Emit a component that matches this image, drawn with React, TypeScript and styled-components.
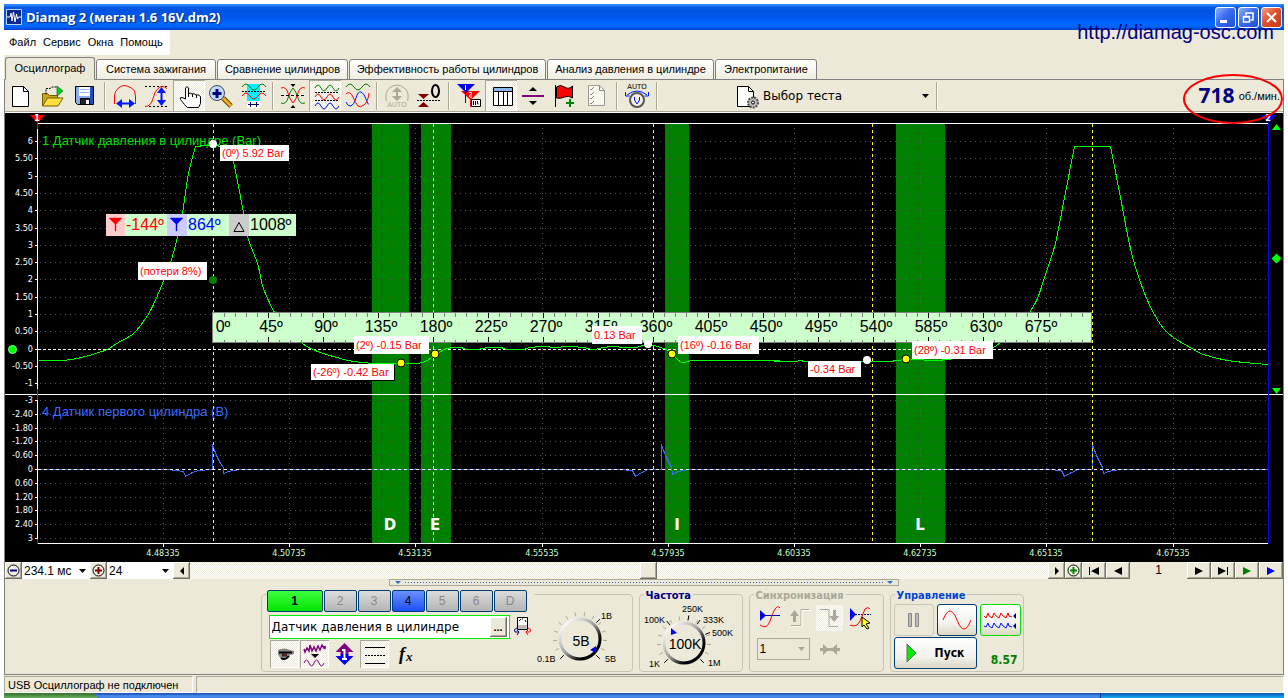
import React from "react";
import styled, { createGlobalStyle, css } from "styled-components";

const FACE = "#ece9d8";
const SHADE = "#aca899";
const UI = `"Liberation Sans", Arial, sans-serif`;
const WIDE = `"DejaVu Sans", Verdana, sans-serif`;
const HEAVY = `"DejaVu Sans Condensed", Tahoma, sans-serif`;
const HUMANIST = `"Open Sans", "Trebuchet MS", sans-serif`;
const dither = css`
  background: conic-gradient(#fff 25%, ${FACE} 0 50%, #fff 0 75%, ${FACE} 0) 0 0 / 2px 2px;
`;

const GlobalStyle = createGlobalStyle`
  * { box-sizing: border-box; }
  body { margin: 0; background: #fff; font: 11px/13px ${UI}; color: #000; }
  button, input, select { font: inherit; color: inherit; margin: 0; padding: 0; border: 0; border-radius: 0; background: none; }
  svg { display: block; }
`;

const Shell = styled.div`
  position: relative;
  padding: 4px 4px 0;
`;

/* ---------- title bar, menu, tabs ---------- */

const TitleBar = styled.header`
  display: flex;
  align-items: center;
  gap: 4px;
  height: 26px;
  padding: 0 2px;
  background: linear-gradient(#3c96ff 0, #0a5fe8 3px, #0053e0 6px, #0058ee 14px, #0068ff 20px, #0063f8 23px, #0340c8 26px);
`;

const Title = styled.h1`
  flex: 1;
  margin: 0;
  font: bold 13px/18px ${HUMANIST};
  color: #fff;
  text-shadow: 1px 1px 1px #0a2a80;
`;

const WindowButtons = styled.div`
  display: flex;
  gap: 2px;
`;

const WindowButton = styled.button<{ $close?: boolean }>`
  width: 21px;
  height: 21px;
  border: 1px solid #fff;
  border-radius: 3px;
  background: ${(p) =>
    p.$close
      ? "linear-gradient(135deg, #f0a088, #e0502c 45%, #c03c14)"
      : "linear-gradient(135deg, #8fb0fa, #3a6cf0 45%, #1e50d8)"};
`;

const SiteLink = styled.a`
  position: absolute;
  top: 21px;
  right: 14px;
  font: 20px/23px ${UI};
  color: #000080;
  text-decoration: none;
`;

const MenuStrip = styled.nav`
  height: 27px;
  padding-bottom: 2px;
  background: ${FACE};
`;

const MenuItems = styled.div`
  display: inline-flex;
  align-items: center;
  gap: 7px;
  height: 25px;
  padding: 0 7px 0 5px;
  background: #fff;
`;

const Tabs = styled.div`
  display: flex;
  align-items: flex-end;
  gap: 1px;
  height: 23px;
  padding-left: 1px;
  background: ${FACE};
  box-shadow: inset 0 -1px #808080;
`;

const Tab = styled.button<{ $w: number; $active?: boolean }>`
  width: ${(p) => p.$w}px;
  height: ${(p) => (p.$active ? 23 : 21)}px;
  border: 1px solid #808080;
  border-bottom-color: ${(p) => (p.$active ? FACE : "#808080")};
  border-radius: 3px 3px 0 0;
  background: ${(p) => (p.$active ? FACE : "linear-gradient(#fff, #f0eee2)")};
  white-space: nowrap;
`;

/* ---------- toolbar ---------- */

const Body = styled.main`
  border: 1px solid #808080;
  border-top: 0;
  background: ${FACE};
`;

const Toolbar = styled.div`
  display: flex;
  align-items: center;
  height: 33px;
  border-bottom: 1px solid #fff;
  box-shadow: inset 0 -1px ${SHADE};
`;

const sunken = css`
  ${dither}
  box-shadow: inset 1px 1px ${SHADE}, inset -1px -1px #fff;
`;

const ToolButton = styled.button<{ $pressed?: boolean }>`
  flex: none;
  width: 32px;
  height: 31px;
  align-self: flex-start;
  ${(p) => p.$pressed && sunken}
`;

const Separator = styled.i`
  flex: none;
  width: 2px;
  height: 28px;
  margin: 0 3px;
  border-left: 1px solid ${SHADE};
  border-right: 1px solid #fff;
`;

const SelectBox = styled.span<{ $w: number; $h: number; $white?: boolean; $framed?: boolean }>`
  display: grid;
  flex: none;
  width: ${(p) => p.$w}px;
  height: ${(p) => p.$h}px;
  align-items: center;
  background: ${(p) => (p.$white ? "#fff" : "none")};
  border: ${(p) => (p.$framed ? `1px solid ${SHADE}` : 0)};
  & > * { grid-area: 1 / 1; }
  & > svg { justify-self: end; margin-right: 4px; pointer-events: none; }
`;

const Select = styled.select<{ $large?: boolean }>`
  appearance: none;
  width: 100%;
  height: 100%;
  padding-left: ${(p) => (p.$large ? 0 : 2)}px;
  font: ${(p) => (p.$large ? `12px/16px ${WIDE}` : `12px/14px ${UI}`)};
`;

const TestPicker = styled.label`
  display: flex;
  align-items: center;
  margin-left: 72px;
`;

const Rpm = styled.output`
  position: relative;
  display: flex;
  align-items: center;
  gap: 4px;
  margin-left: auto;
  padding-right: 3px;
  & strong { padding-bottom: 3px; font: bold 21px/24px ${HUMANIST}; color: #000080; }
`;

const RpmMark = styled.svg`
  position: absolute;
  top: -10px;
  right: 0;
  z-index: 1;
  overflow: visible;
`;

/* ---------- chart ---------- */

const Chart = styled.svg`
  width: 100%;
  height: auto;
  background: #000;
`;

/* ---------- scroll row ---------- */

const ScrollRow = styled.div`
  display: flex;
  height: 17px;
`;

const raised = css`
  background: ${FACE};
  box-shadow: inset -1px -1px #716f64, inset 1px 1px #fff, inset -2px -2px ${SHADE};
`;

const SmallButton = styled.button<{ $w: number }>`
  flex: none;
  display: grid;
  place-items: center;
  width: ${(p) => p.$w}px;
  height: 17px;
  ${raised}
`;

const Page = styled.span`
  flex: none;
  width: 57px;
  font-size: 12px;
  line-height: 17px;
  text-align: center;
`;

const Scroller = styled.input`
  flex: 1;
  min-width: 0;
  height: 17px;
  appearance: none;
  ${dither}
  &::-webkit-slider-thumb {
    appearance: none;
    width: 17px;
    height: 17px;
    ${raised}
  }
`;

const Splitter = styled.div`
  display: flex;
  align-items: center;
  justify-content: space-between;
  width: 510px;
  height: 7px;
  margin: 0 auto;
  padding: 0 5px;
  border: 1px solid ${SHADE};
  &::before, &::after { content: ""; border: 3px solid transparent; border-top-color: #316ac5; border-bottom: 0; }
`;

const SplitterDots = styled.i`
  flex: 1;
  margin: 0 4px;
  height: 1px;
  background: repeating-linear-gradient(90deg, #316ac5 0 1px, transparent 1px 3px);
`;

/* ---------- control panel ---------- */

const Panel = styled.section`
  display: flex;
  justify-content: center;
  gap: 6px;
  height: 88px;
  padding: 2px 4px 2px 0;
`;

const frame = css`
  margin: 0;
  border: 1px solid #c8c5b6;
  border-radius: 4px;
`;

const ChannelGroup = styled.div`
  ${frame}
  display: flex;
  flex: none;
  width: 372px;
  margin-top: 6px;
  padding-left: 5px;
`;

const Group = styled.fieldset<{ $w: number }>`
  ${frame}
  flex: none;
  width: ${(p) => p.$w}px;
  min-width: 0;
  padding: 0;
`;

const Legend = styled.legend<{ $color: string }>`
  margin-left: 4px;
  padding: 3px 2px 0;
  font: bold 11px/9px ${HEAVY};
  color: ${(p) => p.$color};
`;

const ChannelColumn = styled.div`
  width: 267px;
  margin-top: -5px;
`;

const ChannelTabs = styled.div`
  display: flex;
  gap: 1px;
  background: ${FACE};
`;

const ChannelTab = styled.button<{ $tone?: "on" | "blue" }>`
  width: ${(p) => (p.$tone === "on" ? 56 : 33)}px;
  height: 22px;
  border: 1px solid #003c74;
  border-radius: 2px;
  font: ${(p) => (p.$tone === "on" ? "bold" : "normal")} 12px/14px ${UI};
  color: ${(p) => (p.$tone ? "#000" : "#888")};
  background: ${(p) =>
    p.$tone === "on"
      ? "linear-gradient(#40ff40, #00e400)"
      : p.$tone === "blue"
        ? "linear-gradient(#6c90ff, #1c50f8)"
        : "linear-gradient(#dcdcdc, #b4b4b4)"};
`;

const NameRow = styled.div`
  display: flex;
  align-items: center;
  gap: 3px;
  margin: 3px 0 1px 2px;
`;

const NameBox = styled.div`
  display: flex;
  align-items: center;
  width: 241px;
  height: 24px;
  padding-right: 2px;
  border: 1px solid #00f000;
  background: #fff;
  & input { flex: 1; min-width: 0; padding-left: 2px; font: 12px/16px ${WIDE}; }
`;

const MoreButton = styled.button`
  width: 17px;
  height: 20px;
  ${raised}
  font-weight: bold;
  line-height: 12px;
`;

const OptionRow = styled.div`
  display: flex;
  gap: 1px;
  padding-left: 3px;
`;

const OptionButton = styled.button<{ $pressed?: boolean }>`
  width: 29px;
  height: 28px;
  ${(p) => p.$pressed && sunken}
`;

const SyncGrid = styled.div`
  display: grid;
  grid-template-columns: repeat(4, 30px);
  padding: 5px 0 0 6px;
  row-gap: 7px;
  & > span { grid-column: span 2; margin-left: 1px; }
`;

const SyncButton = styled.button<{ $pressed?: boolean }>`
  width: 27px;
  height: 26px;
  ${(p) => p.$pressed && dither}
`;

const RunGrid = styled.div`
  display: grid;
  grid-template-columns: 40px 40px 41px;
  gap: 1px 3px;
  padding: 4px 0 0 3px;
`;

const XpButton = styled.button<{ $edge: string; $span?: number }>`
  display: flex;
  align-items: center;
  justify-content: center;
  gap: 18px;
  grid-column: span ${(p) => p.$span ?? 1};
  height: 32px;
  border: 1px solid ${(p) => p.$edge};
  border-radius: 3px;
  background: linear-gradient(#fff, #f4f3ee 60%, #dcd8c4);
  font: bold 12px/14px ${HEAVY};
  &:disabled { background: ${FACE}; }
`;

const RunValue = styled.output`
  align-self: center;
  padding: 14px 3px 0 0;
  font: bold 12px/14px ${HEAVY};
  color: #008000;
  text-align: right;
`;

/* ---------- status and task bars ---------- */

const StatusBar = styled.footer`
  display: flex;
  gap: 3px;
  height: 18px;
  padding-top: 1px;
  background: ${FACE};
`;

const StatusCell = styled.span<{ $grow?: boolean }>`
  flex: ${(p) => (p.$grow ? "1" : "0 0 189px")};
  padding-left: 3px;
  border: 1px solid;
  border-color: ${SHADE} #fff #fff ${SHADE};
  line-height: 16px;
`;

const TaskBar = styled.div`
  display: flex;
  height: 5px;
  background: linear-gradient(#2058c0 0 1px, #4a90ea 3px, #3a7ce0);
  &::before { content: ""; width: 93px; border-radius: 0 6px 0 0; background: linear-gradient(#3a7a34 0 1px, #6ab060); }
  &::after { content: ""; width: 183px; margin-left: auto; border-left: 1px solid #0a3c90; background: linear-gradient(#1060c0 0 1px, #18b0f0); }
`;

/* ---------- icons ---------- */

/** A run of half waves, starting upwards when amp is positive. */
const wave = (x: number, y: number, half: number, amp: number, count: number) =>
  `M${x} ${y}` + Array.from({ length: count }, (_, i) => `q${half / 2} ${i % 2 ? amp * 2 : -amp * 2} ${half} 0`).join("");

const Icon = ({ w = 32, h = 31, children }: { w?: number; h?: number; children: React.ReactNode }) => (
  <svg width={w} height={h} viewBox={`0 0 ${w} ${h}`} fill="none" stroke="#000" aria-hidden="true">
    {children}
  </svg>
);

const Caret = ({ color = "#000" }: { color?: string }) => (
  <svg width="7" height="4" viewBox="0 0 7 4" aria-hidden="true">
    <path d="M0 0h7L3.500 4z" fill={color} />
  </svg>
);

const NewIcon = () => (
  <Icon>
    <path d="M7.500 6.500h11l5 5v15h-16z" fill="#fff" />
    <path d="M18.500 6.500v5h5" />
  </Icon>
);
const OpenIcon = () => (
  <Icon>
    <path d="M5.500 25.500v-12h5l2 2h8v3" fill="#c8a818" stroke="#706000" />
    <path d="M5.500 26l5-8h15.500l-5 8z" fill="#ffe040" stroke="#706000" />
    <path d="M9 14.500v-6h4l2-1.500h5" strokeDasharray="2 1" />
    <path d="M20 6l6 5-6 5z" fill="#00d020" stroke="#006000" strokeWidth=".6" />
  </Icon>
);
const SaveIcon = () => (
  <Icon>
    <path d="M6.500 6.500h18v18h-16l-2-2z" fill="#88aef0" />
    <path d="M21 7h3v17h-3z" fill="#2048c8" stroke="none" />
    <path d="M10 7h11v9H10z" fill="#fff" stroke="none" />
    <path d="M11 9.500h9M11 12.500h9" stroke="#9ab8f0" />
    <path d="M11.500 18.500h9v6h-9z" fill="#222" />
    <path d="M17 20h3v4h-3z" fill="#fff" stroke="none" />
  </Icon>
);
const SpanIcon = () => (
  <Icon>
    <path d="M5.500 24v-8q0-5 4-8t6.500-2.500 6.500 2.500 4 8v8" stroke="red" />
    <path d="M10 23.500h13" stroke="#0018ff" strokeWidth="2" />
    <path d="M13 19v9l-6-4.500zM20 19v9l6-4.500z" fill="#0018ff" stroke="none" />
  </Icon>
);
const HeightIcon = () => (
  <Icon>
    <path d="M4 6.500h22M8 26.500h18" strokeDasharray="2 2" />
    <path d="M4 26.500q6 0 8-8t5-10q4-4 9 0" stroke="red" />
    <path d="M20.500 11v12" stroke="#0018ff" strokeWidth="2" />
    <path d="M16 13h9l-4.500-6zM16 20h9l-4.500 6z" fill="#0018ff" stroke="none" />
  </Icon>
);
const HandIcon = () => (
  <Icon>
    <path
      d="M12.500 19V8q1.500-3 3 0v6q1.500-2 3.500 0 2-1 4 1 2-1 4.500 1.500v7l-2 4h-11l-3-3-4-5q-1-2.500 1.500-2z"
      fill="#fff"
    />
    <path d="M15.500 13v4M19.500 14v3M23.500 15v3" />
  </Icon>
);
const MagnifierIcon = () => (
  <Icon>
    <path d="M18 18l8 8" stroke="#604000" strokeWidth="5" />
    <path d="M18 18l8 8" stroke="#f0b020" strokeWidth="3" />
    <circle cx="12" cy="13" r="7.500" fill="#c0dcf8" stroke="#446" />
    <path d="M12 9v9M7.500 13.500h9" stroke="#000080" strokeWidth="3" />
  </Icon>
);
const WindowSpanIcon = () => (
  <Icon>
    <path d="M10 4h13v23H10z" fill="#00f0ff" stroke="none" />
    <path d={wave(5, 7, 8, 3, 3)} stroke="#008000" />
    <path d={wave(5, 16, 8, 3, 3)} stroke="red" />
    <path d="M5 11.500h23" strokeDasharray="2 1" />
    <path d="M10 21h13v7H10z" fill="#fff" stroke="none" />
    <path d="M11 24.500h11M13.500 22v5M19.500 22v5" stroke="#000080" />
  </Icon>
);
const CrossIcon = () => (
  <Icon>
    <path d="M4 23q5 2 7-5t5-10q3 3 5 10t7 5" stroke="#008000" />
    <path d="M4 8q5-2 7 5t5 10q3-3 5-10t7-5" stroke="red" />
    <path d="M4 15.500h24" strokeDasharray="3 2" />
    <path d="M13.500 4h5L16 7zM13.500 28h5L16 25z" fill="#000" stroke="none" />
  </Icon>
);
const WavesIcon = () => (
  <Icon>
    <path d={wave(6, 8, 6, 3, 4)} stroke="#008000" />
    <path d="M6 12.500h23M6 20.500h23" strokeDasharray="2 1" />
    <path d={wave(6, 17, 6, 3, 4)} stroke="red" />
    <path d={wave(6, 26, 6, 3, 4)} stroke="#0018d0" />
  </Icon>
);
const OverlapIcon = () => (
  <Icon>
    <path d={wave(5, 7, 8, 3, 3)} stroke="#008000" />
    <path d="M5 22q2 5 5 4t5-8 5-6 5 7 3 5" stroke="#0018ff" />
    <path d="M5 14q4-4 7 3t5 9 6-1 5-12" stroke="red" />
  </Icon>
);
const AutoHeightIcon = () => (
  <Icon>
    <path d="M5.500 21q-2-8 2-12t8.500-4 8.500 4 2 12" stroke={SHADE} />
    <path d="M11 12h10l-5-5zM11 16h10l-5 5z" fill={SHADE} stroke="none" />
    <path d="M16 10v9" stroke={SHADE} strokeWidth="2" />
    <text x="16" y="27" textAnchor="middle" fontSize="7" fontFamily={WIDE} fill={SHADE} stroke="none">AUTO</text>
  </Icon>
);
const ZeroIcon = () => (
  <Icon>
    <path d="M5 14h11l-5.500 5zM5 27h11l-5.500-5z" fill="#800000" stroke="none" />
    <path d="M4 20.500h24" strokeDasharray="2 1" />
    <ellipse cx="22.500" cy="11" rx="3.500" ry="6" strokeWidth="2" />
  </Icon>
);
const MarkersIcon = () => (
  <Icon>
    <path d="M8 11h19l-9.500 9z" fill="red" stroke="none" />
    <path d="M17.500 17v10" stroke="red" />
    <path d="M4 4h18l-9 9z" fill="#0000e8" stroke="none" />
    <path d="M12.500 9v14" stroke="#0000e8" />
    <path d="M12.500 5v5M16 12.500h2.500v2.500h-2v2h2.500" stroke="#fff" />
    <path d="M18.500 19.500h9v7h-9z" fill="#fff" />
    <path d="M20.500 21v4M22.500 21v4M24.500 21v3h1" />
  </Icon>
);
const TableIcon = () => (
  <Icon>
    <path d="M8.500 7.500h19v18h-19z" fill="#fff" />
    <path d="M9 8h18v3H9z" fill="#8ab8f0" stroke="none" />
    <path d="M8 11.500h20M13.500 11v14M18.500 11v14M22.500 11v14" />
  </Icon>
);
const SplitIcon = () => (
  <Icon>
    <path d="M5 16h22" stroke="#800080" strokeWidth="2" />
    <path d="M12 11h8l-4-4zM12 21h8l-4 4z" fill="#000" stroke="none" />
  </Icon>
);
const FlagIcon = () => (
  <Icon>
    <path d="M7.500 7q4-3 8 0t8-1v12q-4-3-8-1t-8 1z" fill="red" />
    <path d="M6.500 5v22" />
    <path d="M21 19v8M17 23h8" stroke="#008000" strokeWidth="2" />
  </Icon>
);
const ChecklistIcon = () => (
  <Icon>
    <path d="M7.500 5.500h11l5 5v15h-16z" fill="#fbf9ee" stroke="#999" />
    <path d="M18.500 5.500v5h5M9 9l1 1 3-3M9 14l1 1 3-3M9 18l1 1 3-3M9 23l1 1 3-3" stroke="#888" />
  </Icon>
);
const AutoVoltIcon = () => (
  <Icon>
    <text x="16" y="9" textAnchor="middle" fontSize="7" fontFamily={WIDE} fill="#000" stroke="none">AUTO</text>
    <path d="M6 15q10-8 20 0M4.500 12v4h4M27.500 12v4h-4" stroke="#0018ff" />
    <circle cx="16" cy="20" r="7" fill="#f4f2e6" stroke="#555" strokeWidth="2" />
    <path d="M13.500 17v3l2.500 4 2.500-4v-3" stroke="#0018ff" />
  </Icon>
);
const TestIcon = () => (
  <Icon w={30}>
    <path d="M4.500 5.500h11l5 5v15h-16z" fill="#fff" />
    <path d="M15.500 5.500v5h5" />
    <circle cx="20" cy="21.500" r="5" fill="#bbb" stroke="#555" strokeWidth="2" strokeDasharray="2 1" />
    <circle cx="20" cy="21.500" r="1.500" fill="#fff" />
  </Icon>
);

type ToolEntry = { name: string; icon?: () => React.JSX.Element; pressed?: boolean };
const sep: ToolEntry = { name: "" };
const tools: ToolEntry[] = [
  { name: "Новый", icon: NewIcon },
  { name: "Открыть", icon: OpenIcon },
  { name: "Сохранить", icon: SaveIcon },
  sep,
  { name: "Ширина", icon: SpanIcon },
  { name: "Высота", icon: HeightIcon },
  { name: "Рука", icon: HandIcon, pressed: true },
  { name: "Лупа", icon: MagnifierIcon },
  { name: "Окно", icon: WindowSpanIcon },
  sep,
  { name: "Центр", icon: CrossIcon },
  { name: "Раздельно", icon: WavesIcon, pressed: true },
  { name: "Вместе", icon: OverlapIcon },
  sep,
  { name: "Авто высота", icon: AutoHeightIcon },
  { name: "Ноль", icon: ZeroIcon },
  sep,
  { name: "Маркеры", icon: MarkersIcon },
  { name: "Таблица", icon: TableIcon, pressed: true },
  { name: "Разделить", icon: SplitIcon },
  { name: "Флаг", icon: FlagIcon },
  { name: "Список", icon: ChecklistIcon },
  sep,
  { name: "Авто напряжение", icon: AutoVoltIcon },
  sep,
];

/* ---------- chart data ---------- */

const pressureTicks = ["6", "5.50", "5", "4.50", "4", "3.50", "3", "2.50", "2", "1.50", "1", "0.50", "0", "-0.50", "-1"];
const sensorTicks = ["-3", "-2.40", "-1.80", "-1.20", "-0.60", "0", "0.60", "1.20", "1.80", "2.40", "3"];
const times = ["4.48335", "4.50735", "4.53135", "4.55535", "4.57935", "4.60335", "4.62735", "4.65135", "4.67535"];
const rows = [
  ...pressureTicks.map((text, i) => ({ text, y: Math.round(141 + i * 17.3) })),
  ...sensorTicks.map((text, i) => ({ text, y: Math.round(400 + i * 13.8) })),
];
const columns = times.map((text, i) => ({ text, x: Math.round(163 + i * 126.2) }));
const bands = [
  { name: "D", x: 372, w: 37, mid: 390 },
  { name: "E", x: 421, w: 30, mid: 435 },
  { name: "I", x: 665, w: 24, mid: 677 },
  { name: "L", x: 896, w: 49, mid: 920 },
];
const strokes = [213, 433, 653, 872, 1092];

/* Smooth stretches of the pressure trace; each starts where the last one ends. */
const pressure = [
  "38,360 57,360 71,359 85,356 98,352 107,349 118,342 132,334 140,325 150,310 160,288 170,262 177,237 182,213 188,173 195,146",
  "195,146 205,145 213,144 220,146 229,146",
  "229,146 233,161 243,212 248,239 257,263 262,285 268,300 274,312 284,328 302,343 310,348 323,353 340,358 353,361 375,363 401,363 415,363 422,362 430,358 443,349",
  "443,349 452,347 460,347 467,349 477,349 488,347 500,347 507,349 522,349 530,347 543,346 555,347 567,346 583,347 593,349 603,347 613,346 623,347 635,347 648,344 660,347 668,350 672,353 677,359 682,362 687,361 693,360",
  "693,360 773,360 775,361 793,361 802,360 807,361 862,361 888,361 906,359 933,360",
  "933,360 947,359 970,355 993,347 1016,328 1029,312 1037,298 1043,280 1047,268 1052,253 1056,238 1065,192 1074,146",
  "1074,146 1110,146",
  "1110,146 1120,197 1128,239 1133,260 1140,282 1147,300 1155,316 1163,328 1173,337 1193,349 1203,354 1227,360 1255,363 1268,364",
];

/** Catmull-Rom spline through the listed points. */
const smooth = (list: string) => {
  const p = list.split(" ").map((s) => s.split(",").map(Number));
  const at = (i: number) => p[Math.max(0, Math.min(p.length - 1, i))];
  return p.slice(1).reduce((d, [x, y], k) => {
    const [a, b, n] = [at(k - 1), at(k), at(k + 2)];
    return `${d}C${b[0] + (x - a[0]) / 6} ${b[1] + (y - a[1]) / 6} ${x - (n[0] - b[0]) / 6} ${y - (n[1] - b[1]) / 6} ${x} ${y}`;
  }, `M${p[0][0]} ${p[0][1]}`);
};

const sensor =
  "38,469 168,469 183,471 185,476 192,472 198,470 212,469 212,444 216,455 220,463 223,467 223,473 228,471 240,469 618,469 632,470 635,476 641,472 648,469 661,469 661,444 665,455 669,463 671,467 672,474 678,471 688,469 1048,469 1061,470 1064,476 1071,472 1078,469 1092,469 1092,444 1096,455 1100,463 1102,467 1103,473 1108,471 1120,469 1268,469";

type Callout = { text: string; x: number; y: number; w: number; h: number };
const callouts: Callout[] = [
  { text: "(0º) 5.92 Bar", x: 220, y: 145, w: 69, h: 16 },
  { text: "(потери 8%)", x: 138, y: 262, w: 69, h: 18 },
  { text: "(2º) -0.15 Bar", x: 354, y: 336, w: 75, h: 18 },
  { text: "(-26º) -0.42 Bar", x: 311, y: 364, w: 83, h: 16 },
  { text: "0.13 Bar", x: 592, y: 326, w: 50, h: 18 },
  { text: "(16º) -0.16 Bar", x: 678, y: 336, w: 81, h: 18 },
  { text: "-0.34 Bar", x: 808, y: 361, w: 53, h: 16 },
  { text: "(28º) -0.31 Bar", x: 912, y: 341, w: 81, h: 18 },
];
const dots = [
  { x: 213, y: 144, fill: "#fff" },
  { x: 213, y: 280, fill: "#008000" },
  { x: 401, y: 363, fill: "#ff0" },
  { x: 435, y: 354, fill: "#ff0" },
  { x: 648, y: 344, fill: "#fff" },
  { x: 672, y: 354, fill: "#ff0" },
  { x: 867, y: 360, fill: "#fff" },
  { x: 906, y: 359, fill: "#ff0" },
];
const cursors = [
  { x: 106, tab: 19, w: 61, tint: "#ffcccc", ink: "red", text: "-144º" },
  { x: 167, tab: 20, w: 62, tint: "#ccccff", ink: "#0000ff", text: "864º" },
  { x: 229, tab: 20, w: 67, tint: "#cccccc", ink: "#000", text: "1008º" },
];

const Oscillogram = () => (
  <Chart viewBox="5 113 1278 449" fontFamily={UI} role="img" aria-label="Осциллограмма">
    <g shapeRendering="crispEdges">
      {bands.map((b) => (
        <rect key={b.name} x={b.x} y="124" width={b.w} height="419" fill="#008000" />
      ))}
      <g stroke="#555" strokeDasharray="1 4">
        {rows.map((r) => (
          <path key={r.y} d={`M40 ${r.y + 0.5}H1267`} />
        ))}
        {columns.map((c) => (
          <path key={c.x} d={`M${c.x + 0.5} 128V543`} />
        ))}
      </g>
      <g stroke="#fff">
        {rows.map((r) => (
          <path key={r.y} d={`M35 ${r.y + 0.5}h3`} />
        ))}
        {columns.map((c) => (
          <path key={c.x} d={`M${c.x + 0.5} 544v3`} />
        ))}
        <path d="M37.500 123V543.500H1268M37 123.500H1268M5 394.500H1283" fill="none" />
        <path d="M38 349.500H1268" strokeDasharray="3 2" />
      </g>
      <polyline points={sensor} fill="none" stroke="#3c6cff" transform="translate(.5 .5)" />
      <path d="M38 469.500H1268" stroke="#fff" strokeDasharray="3 3" />
    </g>
    <text x="42" y="145" fontSize="13" fill="#00e000">1 Датчик давления в цилиндре (Bar)</text>
    <text x="42" y="416" fontSize="13" fill="#3c6cff">4 Датчик первого цилиндра (В)</text>
    <g shapeRendering="crispEdges">
      <path d={pressure.map(smooth).join("")} fill="none" stroke="#00ff00" transform="translate(.5 .5)" />
      <g stroke="#ff0" strokeDasharray="3 3">
        {strokes.map((x) => (
          <path key={x} d={`M${x + 0.5} 124V543`} />
        ))}
      </g>
      <path d="M37.500 122v7M37.500 389v11M37.500 539v5" stroke="red" />
      <path d="M1268.500 122V544" stroke="#0000ff" />
    </g>
    <g fontSize="9" fill="#fff" textAnchor="end" fontFamily={HEAVY}>
      {rows.map((r) => (
        <text key={r.y} x="33" y={r.y + 3}>{r.text}</text>
      ))}
    </g>
    <g fontSize="9" fill="#ccffcc" textAnchor="middle" fontFamily={HEAVY}>
      {columns.map((c) => (
        <text key={c.x} x={c.x} y="556">{c.text}</text>
      ))}
    </g>
    <g fontSize="15" fontWeight="bold" fill="#fff" textAnchor="middle" fontFamily={WIDE}>
      {bands.map((b) => (
        <text key={b.name} x={b.mid} y="530">{b.name}</text>
      ))}
    </g>

    <path d="M30 115h15l-7.500 8z" fill="red" />
    <path d="M1261 115h15l-7.500 8z" fill="#0000ff" />
    <g fontSize="8" fontWeight="bold" fill="#fff" textAnchor="middle" fontFamily={WIDE}>
      <text x="37" y="121">1</text>
      <text x="1268" y="121">2</text>
    </g>
    <circle cx="12.500" cy="349.500" r="4" fill="#00ff00" stroke="#80ff80" />
    <path d="M1272 130h9l-4.500-6zM1272 388h9l-4.500 6zM1276.500 253.500l5 5-5 5-5-5z" fill="#00ff00" />

    {cursors.map((c, i) => (
      <g key={c.text}>
        <rect x={c.x} y="214" width={c.w} height="22" fill="#ccffcc" />
        <rect x={c.x} y="214" width={c.tab} height="22" fill={c.tint} />
        {i < 2 ? (
          <path d={`M${c.x + 3} 218h13l-6 6v7h-1v-7z`} fill={c.ink} stroke={c.ink} strokeWidth=".4" />
        ) : (
          <path d={`M${c.x + 5} 231.500h10l-5-9z`} fill="none" stroke={c.ink} />
        )}
        <text x={c.x + c.tab + 1} y="230" fontSize="16" fill={c.ink}>{c.text}</text>
      </g>
    ))}

    <g shapeRendering="crispEdges">
      <rect x="212.500" y="312.500" width="879" height="30" fill="#ccffcc" stroke="#808080" />
      {Array.from({ length: 79 }, (_, i) => (
        <path
          key={i}
          d={`M${224.5 + i * 11} 313v${(i + 1) % 5 ? 4 : 5}M${224.5 + i * 11} 342v${(i + 1) % 5 ? -2 : -5}`}
          stroke={(i + 1) % 5 ? "#808080" : "#000"}
        />
      ))}
    </g>
    <g fontSize="16" fill="#000" textAnchor="middle">
      {Array.from({ length: 13 + 3 }, (_, i) => (
        <text key={i} x={i ? 216 + i * 55 : 223} y="332">{`${i * 45}º`}</text>
      ))}
    </g>

    <rect x="312" y="365" width="83" height="16" fill="#000" />
    {callouts.map((c) => (
      <g key={c.text}>
        <rect x={c.x} y={c.y} width={c.w} height={c.h} fill="#fff" />
        <text x={c.x + 2} y={c.y + c.h / 2 + 4} fontSize="11" fill="red">{c.text}</text>
      </g>
    ))}
    {dots.map((d) => (
      <circle key={`${d.x}-${d.y}`} cx={d.x} cy={d.y} r="4" fill={d.fill} stroke={d.fill === "#ff0" ? "#000" : "none"} />
    ))}
  </Chart>
);

/* ---------- knobs ---------- */

type KnobLabel = { text: string; x: number; y: number };
type KnobProps = {
  w: number;
  cx: number;
  cy: number;
  value: string;
  valueY: number;
  pointer: string;
  labels: KnobLabel[];
  major: number[];
  id: string;
};

const Knob = ({ w, cx, cy, value, valueY, pointer, labels, major, id }: KnobProps) => {
  const ray = (deg: number, r1: number, r2: number) => {
    const a = (deg * Math.PI) / 180;
    return `M${cx + r1 * Math.cos(a)} ${cy - r1 * Math.sin(a)}L${cx + r2 * Math.cos(a)} ${cy - r2 * Math.sin(a)}`;
  };
  const minor = Array.from({ length: 14 }, (_, i) => -45 + i * 20.8);
  return (
    <svg width={w} height="74" viewBox={`0 0 ${w} 74`} fontFamily={UI} role="img" aria-label={value}>
      <defs>
        <linearGradient id={id} x1="0" y1="0" x2="1" y2="1">
          <stop offset=".1" stopColor="#fff" />
          <stop offset=".5" stopColor="#999" />
          <stop offset=".75" stopColor="#000" />
        </linearGradient>
      </defs>
      <path d={minor.map((d) => ray(d, 23, 27)).join("")} stroke={SHADE} />
      <path d={major.map((d) => ray(d, 23, 28)).join("")} stroke="#000" />
      <circle cx={cx} cy={cy} r="20" fill={FACE} stroke={`url(#${id})`} strokeWidth="3" />
      <path d={pointer} fill="#0000ff" />
      <text x={cx + 1} y={valueY} fontSize="14" textAnchor="middle">{value}</text>
      {labels.map((l) => (
        <text key={l.text} x={l.x} y={l.y} fontSize="9">{l.text}</text>
      ))}
    </svg>
  );
};

/* ---------- page ---------- */

const tabs = [
  { text: "Осциллограф", w: 90 },
  { text: "Система зажигания", w: 120 },
  { text: "Сравнение цилиндров", w: 131 },
  { text: "Эффективность работы цилиндров", w: 197 },
  { text: "Анализ давления в цилиндре", w: 167 },
  { text: "Электропитание", w: 102 },
];

const ZoomIcon = ({ color, plus }: { color: string; plus?: boolean }) => (
  <Icon w={13} h={13}>
    <circle cx="6.500" cy="6.500" r="5.500" fill="#f4f2e6" />
    <path d={plus ? "M6.500 3v7M3 6.500h7" : "M3 6.500h7"} stroke={color} strokeWidth="2" />
  </Icon>
);

const Arrow = ({ d, color = "#000" }: { d: string; color?: string }) => (
  <svg width="12" height="8" viewBox="0 0 12 8" fill={color} aria-hidden="true">
    <path d={d} />
  </svg>
);

const RIGHT = "M2 0v8l8-4z";
const LEFT = "M10 0v8L2 4z";

export default function App() {
  return (
    <>
      <GlobalStyle />
      <Shell>
        <TitleBar>
          <Icon w={16} h={16}>
            <path d="M.5.5h15v15H.5z" fill="#0a2a90" stroke="#c0d0f8" />
            <path d="M1 8h3l1-4 1 8 1.500-9 1.500 10 1.500-8 1 5 1-2h3" stroke="#fff" />
          </Icon>
          <Title>Diamag 2 (меган 1.6 16V.dm2)</Title>
          <WindowButtons>
            <WindowButton aria-label="Свернуть">
              <Icon w={19} h={19}><path d="M4 13.500h7" stroke="#fff" strokeWidth="3" /></Icon>
            </WindowButton>
            <WindowButton aria-label="Восстановить">
              <Icon w={19} h={19}>
                <path d="M7 7.500V5h7v7h-2.500M7 5h7" stroke="#fff" strokeWidth="1.500" />
                <path d="M4.500 8.500h6v5.500h-6zM4.500 9h6" stroke="#fff" strokeWidth="1.500" />
              </Icon>
            </WindowButton>
            <WindowButton $close aria-label="Закрыть">
              <Icon w={19} h={19}><path d="M5 5l9 9M14 5l-9 9" stroke="#fff" strokeWidth="2" /></Icon>
            </WindowButton>
          </WindowButtons>
        </TitleBar>
        <SiteLink href="http://diamag-osc.com">http://diamag-osc.com</SiteLink>

        <MenuStrip>
          <MenuItems>
            {["Файл", "Сервис", "Окна", "Помощь"].map((m) => (
              <button key={m}>{m}</button>
            ))}
          </MenuItems>
        </MenuStrip>
        <Tabs role="tablist">
          {tabs.map((t, i) => (
            <Tab key={t.text} role="tab" aria-selected={i === 0} $w={t.w} $active={i === 0}>{t.text}</Tab>
          ))}
        </Tabs>

        <Body>
          <Toolbar>
            {tools.map((t, i) =>
              t.icon ? (
                <ToolButton key={i} aria-label={t.name} $pressed={t.pressed}><t.icon /></ToolButton>
              ) : (
                <Separator key={i} />
              ),
            )}
            <TestPicker>
              <TestIcon />
              <SelectBox $w={170} $h={24}>
                <Select $large aria-label="Тест"><option>Выбор теста</option></Select>
                <Caret />
              </SelectBox>
            </TestPicker>
            <Separator />
            <Rpm>
              <strong>718</strong> об./мин.
              <RpmMark width="100" height="50" viewBox="0 0 100 50" aria-hidden="true">
                <ellipse cx="50" cy="26" rx="49" ry="24" fill="none" stroke="red" strokeWidth="2" />
              </RpmMark>
            </Rpm>
          </Toolbar>

          <Oscillogram />

          <ScrollRow>
            <SmallButton $w={17} aria-label="Уменьшить"><ZoomIcon color="#000080" /></SmallButton>
            <SelectBox $w={68} $h={17} $white>
              <Select aria-label="Время"><option>234.1 мс</option></Select>
              <Caret />
            </SelectBox>
            <SmallButton $w={17} aria-label="Увеличить"><ZoomIcon color="#800000" plus /></SmallButton>
            <SelectBox $w={66} $h={17} $white>
              <Select aria-label="Масштаб"><option>24</option></Select>
              <Caret />
            </SelectBox>
            <SmallButton $w={17} aria-label="Влево"><Arrow d="M8 0v8L4 4z" /></SmallButton>
            <Scroller type="range" min="0" max="1000" defaultValue="535" aria-label="Прокрутка" />
            <SmallButton $w={17} aria-label="Вправо"><Arrow d="M4 0v8l4-4z" /></SmallButton>
            <SmallButton $w={17} aria-label="Добавить"><ZoomIcon color="#008000" plus /></SmallButton>
            <SmallButton $w={24} aria-label="В начало"><Arrow d="M1 0h1v8H1zM11 0v8L3 4z" /></SmallButton>
            <SmallButton $w={24} aria-label="Назад"><Arrow d={LEFT} /></SmallButton>
            <Page>1</Page>
            <SmallButton $w={24} aria-label="Вперёд"><Arrow d={RIGHT} /></SmallButton>
            <SmallButton $w={24} aria-label="В конец"><Arrow d="M1 0v8l8-4zM10 0h1v8h-1z" /></SmallButton>
            <SmallButton $w={24} aria-label="Воспроизвести"><Arrow d={RIGHT} color="#008000" /></SmallButton>
            <SmallButton $w={24} aria-label="Воспроизвести всё"><Arrow d={RIGHT} color="#0000ff" /></SmallButton>
          </ScrollRow>
          <Splitter><SplitterDots /></Splitter>

          <Panel>
            <ChannelGroup>
              <ChannelColumn>
                <ChannelTabs>
                  {["1", "2", "3", "4", "5", "6", "D"].map((c) => (
                    <ChannelTab key={c} $tone={c === "1" ? "on" : c === "4" ? "blue" : undefined}>{c}</ChannelTab>
                  ))}
                </ChannelTabs>
                <NameRow>
                  <NameBox>
                    <input aria-label="Название канала" defaultValue="Датчик давления в цилиндре" />
                    <MoreButton aria-label="Выбрать датчик">...</MoreButton>
                  </NameBox>
                  <Icon w={20} h={20}>
                    <path d="M4.500.5h10v12h-10z" fill="#bbb" />
                    <path d="M5 1h9v7H5z" fill="#fff" stroke="none" />
                    <path d="M6 4l2-2M9 2h1M12 3l1 2" />
                    <path d="M4 11q-4 1-2 4h4M4 13l2 2-2 3" stroke="#000080" />
                    <path d="M15 11q4 1 2 4h-4M15 13l-2 2 2 3" stroke="red" />
                  </Icon>
                </NameRow>
                <OptionRow>
                  <OptionButton $pressed aria-label="Показать">
                    <Icon w={29} h={28}>
                      <path d="M8 10q6-3 12 0l4 1v3l-4 1q-3 5-7 4-4-1-5-5z" fill="#888" stroke="none" />
                      <path d="M9 12.500h13M11 18q4 3 8-2" strokeWidth="2" />
                      <path d="M12 15h5" stroke="#222" strokeWidth="3" />
                      <path d="M14 15h2" stroke="red" />
                    </Icon>
                  </OptionButton>
                  <OptionButton $pressed aria-label="Фильтр">
                    <Icon w={29} h={28}>
                      <path d="M4 9l1 3 2-4 2 3 1-6 2 6 2-4 2 4 2-5 2 4 2-5 2 3 1-2v3" stroke="#800080" strokeWidth="1.500" />
                      <path d="M11 14h8l-4 4z" fill="#000" stroke="none" />
                      <path d={wave(4, 23, 5, 3, 4)} stroke="#800080" />
                    </Icon>
                  </OptionButton>
                  <OptionButton aria-label="Инвертировать">
                    <Icon w={29} h={28}>
                      <path d="M14.500 3l9 9h-5v2h-8v-2h-5z" fill="#800080" stroke="none" />
                      <path d="M14.500 25l9-9h-5v-2h-8v2h-5z" fill="#0000ff" stroke="none" />
                      <path d="M14.500 9v10M12 10h2M12 19h5" stroke="#fff" strokeWidth="2" />
                    </Icon>
                  </OptionButton>
                  <OptionButton $pressed aria-label="Линии">
                    <Icon w={29} h={28}>
                      <path d="M5 7.500h20M5 23.500h20" />
                      <path d="M5 15.500h20" strokeDasharray="2 1" />
                    </Icon>
                  </OptionButton>
                  <OptionButton aria-label="Функция">
                    <Icon w={29} h={28}>
                      <text x="9" y="20" fontSize="18" fontStyle="italic" fontWeight="bold" fontFamily="'Liberation Serif', serif" fill="#000" stroke="none">f</text>
                      <text x="16" y="21" fontSize="13" fontStyle="italic" fontWeight="bold" fontFamily="'Liberation Serif', serif" fill="#000" stroke="none">x</text>
                    </Icon>
                  </OptionButton>
                </OptionRow>
              </ChannelColumn>
              <Knob
                id="volts" w={98} cx={46} cy={44} value="5В" valueY={51} pointer="M56 55l6-4v7z"
                major={[45, 225, 315]}
                labels={[{ text: "1В", x: 67, y: 24 }, { text: "0.1В", x: 3, y: 67 }, { text: "5В", x: 71, y: 67 }]}
              />
            </ChannelGroup>

            <Group $w={104}>
              <Legend $color="#000080">Частота</Legend>
              <Knob
                id="rate" w={102} cx={44} cy={43} value="100K" valueY={49} pointer="M31 28v7l6-2z"
                major={[128, 80, 55, 22, 315, 225]}
                labels={[
                  { text: "100K", x: 4, y: 23 },
                  { text: "250K", x: 42, y: 12 },
                  { text: "333K", x: 63, y: 23 },
                  { text: "500K", x: 72, y: 36 },
                  { text: "1K", x: 9, y: 67 },
                  { text: "1M", x: 68, y: 66 },
                ]}
              />
            </Group>

            <Group $w={135}>
              <Legend $color={SHADE}>Синхронизация</Legend>
              <SyncGrid>
                <SyncButton aria-label="Уровень">
                  <Icon w={27} h={26}>
                    <path d="M4 5v11l6-5.500z" fill="#0000ff" stroke="none" />
                    <path d="M4 10.500h20" stroke="#0000c0" />
                    <path d="M4 20q7 5 10-4t5-12q3-4 5-1" stroke="red" />
                  </Icon>
                </SyncButton>
                <SyncButton aria-label="Фронт">
                  <Icon w={27} h={26}>
                    <path d="M5 20.500h10v-16h8" stroke={SHADE} />
                    <path d="M6 21.500h10v-16h8" stroke="#fff" />
                    <path d="M4 11h9l-4.500-6zM7 11h3v6H7z" fill={SHADE} stroke="none" />
                  </Icon>
                </SyncButton>
                <SyncButton $pressed aria-label="Спад">
                  <Icon w={27} h={26}>
                    <path d="M4 4.500h9v17h9" stroke={SHADE} />
                    <path d="M13 11h10l-5 6zM17 11h3V5h-3z" fill={SHADE} stroke="none" />
                  </Icon>
                </SyncButton>
                <SyncButton aria-label="Захват">
                  <Icon w={27} h={26}>
                    <path d="M4 3v13l6-6.500z" fill="#0000ff" stroke="none" />
                    <path d="M9 9.500h16" stroke="#000080" strokeDasharray="2 1" />
                    <path d="M4 20q7 3 10-4t5-12q3-3 5 0" stroke="red" />
                    <path d="M16 12l8 6-4 1 3 4-2 1-3-4-2 2z" fill="#ff0" />
                  </Icon>
                </SyncButton>
                <SelectBox $w={53} $h={22} $framed>
                  <Select aria-label="Канал синхронизации" defaultValue="1"><option>1</option></Select>
                  <Caret color={SHADE} />
                </SelectBox>
                <SyncButton aria-label="Центрировать">
                  <Icon w={27} h={26}>
                    <path d="M4 11.500h20" stroke={SHADE} strokeWidth="3" />
                    <path d="M7 6v11l6-5.500zM21 6v11l-6-5.500z" fill={SHADE} stroke="none" />
                  </Icon>
                </SyncButton>
              </SyncGrid>
            </Group>

            <Group $w={134}>
              <Legend $color="#0046d5">Управление</Legend>
              <RunGrid>
                <XpButton $edge="#c9c7ba" disabled aria-label="Пауза">
                  <Icon w={14} h={18}>
                    <path d="M1.500 2.500h3v13h-3zM8.500 2.500h3v13h-3z" fill="#bbb" stroke="#888" />
                  </Icon>
                </XpButton>
                <XpButton $edge="#003c74" aria-label="Синус">
                  <Icon w={30} h={22}><path d="M1 11q7-18 14 0t14 0" stroke="red" /></Icon>
                </XpButton>
                <XpButton $edge="#00e000" aria-label="Сигналы">
                  <Icon w={34} h={22}>
                    <path d="M1 7l2 2 2-5 1 3 3 2 2-5 2 3 3 2 2-5 2 3 3 2 2-5 1 3 3 1" stroke="red" />
                    <path d="M1 17l2 1 2-4 1 3 3 2 2-5 2 3 3 2 2-5 2 3 3 2 2-5 1 3 3 1" stroke="#0018ff" />
                    <path d="M33 4v6l-3-3zM33 14v6l-3-3z" fill="#000080" stroke="none" />
                  </Icon>
                </XpButton>
                <XpButton $edge="#003c74" $span={2}>
                  <Icon w={11} h={20}><path d="M1 1v18l9-9z" fill="#00f000" stroke="#666" /></Icon>
                  Пуск
                </XpButton>
                <RunValue>8.57</RunValue>
              </RunGrid>
            </Group>
          </Panel>
        </Body>

        <StatusBar>
          <StatusCell>USB Осциллограф не подключен</StatusCell>
          <StatusCell $grow />
        </StatusBar>
        <TaskBar />
      </Shell>
    </>
  );
}
